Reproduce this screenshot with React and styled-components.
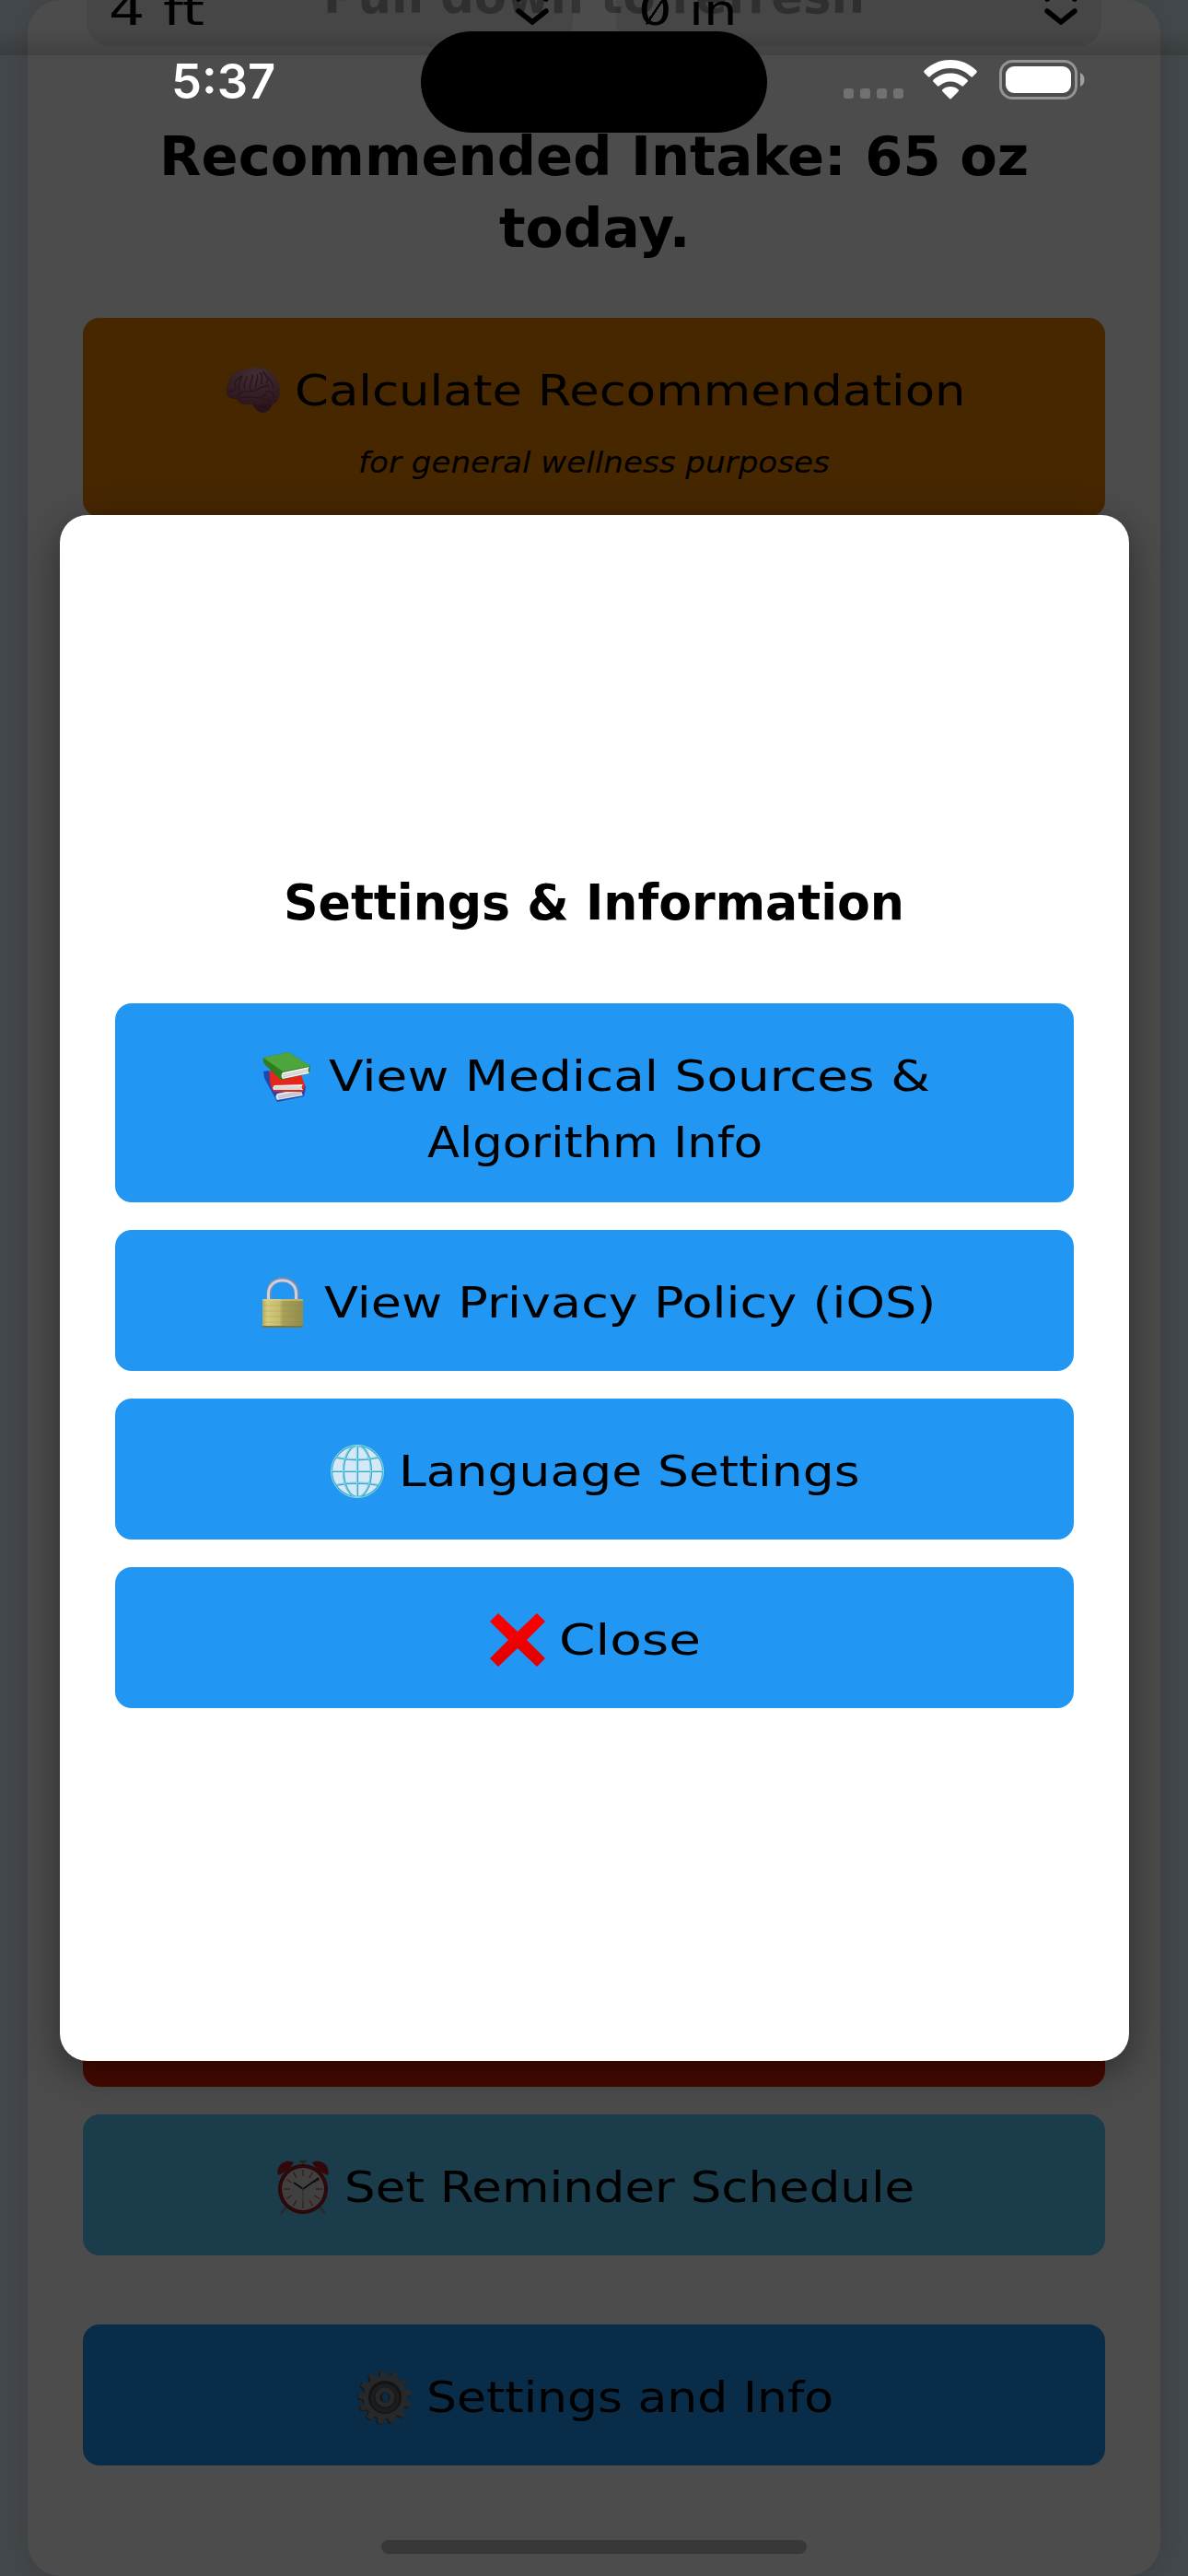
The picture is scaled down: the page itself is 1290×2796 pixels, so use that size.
import React, { useLayoutEffect, useRef, useState } from "react";
import styled, { createGlobalStyle, css } from "styled-components";

// scales a line of text horizontally so that it fills the given width
function FitText({ width, children }) {
  const ref = useRef(null);
  const [scale, setScale] = useState(1);

  useLayoutEffect(() => {
    setScale(width / ref.current.offsetWidth);
  }, [width, children]);

  return (
    <FitBox $width={width}>
      <FitInner ref={ref} style={{ transform: `scaleX(${scale})` }}>
        {children}
      </FitInner>
    </FitBox>
  );
}

const BrainIcon = () => (
  <Icon viewBox="0 0 60 60">
    <defs>
      <radialGradient id="brain" cx="55%" cy="20%" r="80%">
        <stop offset="0" stopColor="#dc9aab" />
        <stop offset="1" stopColor="#9c4d68" />
      </radialGradient>
    </defs>
    <path
      d="M28 44c5-5 18-4 23-1-1 6-5 11-11 11-6-1-8-5-12-10z"
      fill="#874058"
    />
    <path
      d="M5 38C-1 35 0 26 3 22 4 14 10 8 19 8c8-5 20-4 26-1 6 2 9 7 11 12 4 6 4 17 0 22-3 5-9 4-13 4-7 1-12-1-17 0-7 1-12-1-13-6-3 0-6 0-8-1z"
      fill="url(#brain)"
    />
    <g fill="none" stroke="#8c4863" strokeWidth="1.600" strokeLinecap="round">
      <path d="M13 40c-1-8 5-9 11-9 5 0 9 0 12-3 4-4 8-2 11-4M17 37c5 2 9-2 14 0s9 1 12-3M44 31c5-2 9 2 8 8M40 40c4-2 8 0 9 3" />
      <path d="M4 30c4 2 8-2 6-7 0-5 5-7 8-9M15 29c-4-5 2-8 2-13M21 28c-3-5 2-9 2-13M27 29c-3-6 3-9 2-16M33 27c-2-6 4-9 1-14M39 23c-2-5 3-6-1-12M44 22c4-5-1-9-3-12M51 27c2-6-4-7-4-11" />
    </g>
  </Icon>
);

const BooksIcon = () => (
  <Icon viewBox="0 0 60 60">
    <path d="M4 25l6-1 8 22 31-7 1 4-2 9-29 6L5 32z" fill="#2446ab" />
    <path d="M19 49l28-6c-2 3-2 5 0 8l-28 5c-2-2-2-5 0-7z" fill="#dfe3ea" />
    <path d="M20 52l25-5M20 54l25-5" stroke="#9aa3b5" strokeWidth=".8" />
    <path d="M11 24l8-3 26 7 4 12-2 7H16c-4-3-6-11-5-23z" fill="#e6261b" />
    <path d="M16 40l31-1c-2 2-2 4 0 6H15c-1-2-1-3 1-5z" fill="#f1f1f1" />
    <path d="M16 42h29M16 44h29" stroke="#b5b5b5" strokeWidth=".8" />
    <path d="M4 10L31 4l24 15-1 8-31 7L6 18c-2-2-3-5-2-8z" fill="#2e7d21" />
    <path d="M4 10L31 4l24 15-30 6z" fill="#4fa53d" />
    <path d="M25 26l29-6c-2 2-2 5 0 7l-29 6c-2-2-2-5 0-7z" fill="#eee" />
    <path d="M25 29l27-6M25 31l27-6" stroke="#b9b9b9" strokeWidth=".8" />
  </Icon>
);

const LockIcon = () => (
  <Icon viewBox="0 0 60 60">
    <defs>
      <linearGradient id="brass">
        <stop offset="0" stopColor="#b9ac5b" />
        <stop offset=".12" stopColor="#d3cb7e" />
        <stop offset=".42" stopColor="#c4bb6c" />
        <stop offset=".5" stopColor="#a9a15a" />
        <stop offset="1" stopColor="#918c4d" />
      </linearGradient>
    </defs>
    <path
      d="M15 30V20c0-20 30-20 30 0v10"
      fill="none"
      stroke="#7d8ba5"
      strokeWidth="5.500"
    />
    <path
      d="M14.500 30V20c0-19 30-19 30 0v10"
      fill="none"
      stroke="#c9d2e4"
      strokeWidth="3"
    />
    <rect x="8" y="26" width="44" height="31" rx="1.500" fill="url(#brass)" />
    <path d="M8 27h44" stroke="#dcd68e" strokeWidth="1.200" />
    <path d="M8 56h44" stroke="#7c7340" strokeWidth="2" />
    <path
      d="M9 33h42M9 39h42M9 45h42M9 51h42"
      stroke="#8d8440"
      strokeWidth=".6"
      opacity=".4"
    />
  </Icon>
);

const GlobeIcon = () => (
  <Icon viewBox="0 0 60 60">
    <circle cx="30" cy="30" r="28" fill="#d5e8f8" />
    <g fill="none" stroke="#3fa5c6" strokeWidth="2.200">
      <circle cx="30" cy="30" r="28" />
      <ellipse cx="30" cy="30" rx="15" ry="28" />
      <path d="M30 2v56M2 30h56M7 15c14 3 32 3 46 0M7 45c14-3 32-3 46 0" />
    </g>
    <g fill="none" stroke="#7fdcec" strokeWidth="1">
      <circle cx="30" cy="30" r="28.500" />
      <ellipse cx="29.500" cy="30" rx="15" ry="28" />
      <path d="M29.500 2v56M2 29.500h56M7 14.500c14 3 32 3 46 0M7 44.500c14-3 32-3 46 0" />
    </g>
  </Icon>
);

const CrossIcon = () => (
  <Icon viewBox="0 0 60 60">
    <defs>
      <linearGradient id="cross" x2="0" y2="1">
        <stop offset="0" stopColor="#ff0000" />
        <stop offset="1" stopColor="#e00000" />
      </linearGradient>
    </defs>
    <path
      d="M9 1l21 20L51 1l9 9-20 20 20 20-9 9-21-20L9 59l-9-9 20-20L0 10z"
      fill="url(#cross)"
    />
  </Icon>
);

const ClockIcon = () => (
  <Icon viewBox="0 0 60 60">
    <path d="M13 50l-7 9M47 50l7 9" stroke="#8a8a8a" strokeWidth="2.500" />
    <path d="M26 2h8M30 2v5" stroke="#7d7d7d" strokeWidth="2.500" />
    <path
      d="M3 17C0 8 9-2 20 3c-3 6-9 11-17 14zM57 17C60 8 51-2 40 3c3 6 9 11 17 14z"
      fill="#a81d23"
    />
    <circle cx="30" cy="32" r="27" fill="#8e141b" />
    <circle cx="30" cy="32" r="25" fill="none" stroke="#b02a30" />
    <circle cx="30" cy="32" r="23" fill="#d6d6d9" />
    <g stroke="#c6505a" strokeWidth="1.300">
      {[0, 30, 60, 90, 120, 150, 180, 210, 240, 270, 300, 330].map((a) => (
        <path key={a} d="M30 11v7" transform={`rotate(${a} 30 32)`} />
      ))}
    </g>
    <path d="M20 25l10 7 17-12" fill="none" stroke="#222" strokeWidth="1.800" />
    <path d="M30 31v17" stroke="#b59a6d" strokeWidth="1.100" />
  </Icon>
);

const teeth = [...Array(13)].map((_, i) => (i * 360) / 13 - 4);

const GearIcon = () => (
  <Icon viewBox="0 0 60 60">
    <g fill="#50565c" transform="translate(-1.500 1)">
      {teeth.map((a) => (
        <path key={a} d="M27 1h6l2 10H25z" transform={`rotate(${a} 30 30)`} />
      ))}
      <circle cx="30" cy="30" r="23.500" />
    </g>
    <g fill="#82888d">
      {teeth.map((a) => (
        <path key={a} d="M27.500 1h5l2 10h-9z" transform={`rotate(${a} 30 30)`} />
      ))}
      <circle cx="30" cy="30" r="23.500" />
    </g>
    <circle cx="30" cy="30" r="18" fill="#3f454b" />
    <circle cx="30" cy="31" r="15.500" fill="#5b6268" />
    <circle cx="30" cy="31" r="11.500" fill="#474d53" />
    <circle cx="30" cy="30" r="10.500" fill="#7f858a" />
    <circle cx="30" cy="30" r="5.500" fill="#3f454b" />
    <ellipse cx="30.500" cy="30" rx="3.800" ry="4.800" fill="#2196f3" />
  </Icon>
);

const Chevrons = () => (
  <ChevronSvg viewBox="0 0 36 42">
    <path
      d="M3 14L18 2l15 12M3 27l15 12 15-12"
      fill="none"
      stroke="#000"
      strokeWidth="5.500"
      strokeLinecap="round"
    />
  </ChevronSvg>
);

const options = [
  {
    icon: BooksIcon,
    label: "View Medical Sources &",
    width: 653,
    second: "Algorithm Info",
    secondWidth: 364,
  },
  { icon: LockIcon, label: "View Privacy Policy (iOS)", width: 664 },
  { icon: GlobeIcon, label: "Language Settings", width: 501 },
  { icon: CrossIcon, label: "Close", width: 154 },
];

function ActionButton({ icon: IconComp, label, width, color, children }) {
  return (
    <Button $color={color}>
      <ButtonLine>
        <IconComp />
        <FitText width={width}>{label}</FitText>
      </ButtonLine>
      {children}
    </Button>
  );
}

function StatusBar() {
  return (
    <StatusRow>
      <Time>
        <FitText width={113}>5:37</FitText>
      </Time>
      <Island />
      <StatusIcons>
        <Signal>
          <i />
          <i />
          <i />
          <i />
        </Signal>
        <WifiSvg viewBox="0 0 58 43">
          <g fill="#fff">
            <path d="M29 0c11.500 0 21 4.300 28.200 11.500.8.800.8 1.600.1 2.400l-3.900 4c-.8.800-1.600.8-2.400 0C45 12.200 37.500 9 29 9S13 12.200 7 17.900c-.8.800-1.600.8-2.400 0l-3.900-4c-.7-.8-.7-1.600.1-2.400C8 4.300 17.500 0 29 0z" />
            <path d="M29 14.500c7.400 0 13.600 2.700 18.300 7.100.8.800.8 1.700 0 2.500l-4 4c-.8.800-1.600.7-2.400 0-3.300-2.900-7.300-4.600-11.900-4.600s-8.600 1.700-11.900 4.600c-.8.700-1.600.8-2.400 0l-4-4c-.8-.8-.8-1.700 0-2.500 4.700-4.400 10.900-7.100 18.300-7.100z" />
            <path d="M29 29c3.400 0 6.200 1.200 8.400 3 .8.700.8 1.600 0 2.400l-7.200 7.400c-.8.800-1.600.8-2.400 0l-7.200-7.400c-.8-.8-.8-1.700 0-2.400 2.200-1.800 5-3 8.400-3z" />
          </g>
        </WifiSvg>
        <BatterySvg viewBox="0 0 94 43">
          <rect
            x="1.500"
            y="1.500"
            width="82"
            height="40"
            rx="13"
            fill="none"
            stroke="#949494"
            strokeWidth="3"
          />
          <rect x="7" y="7" width="71" height="29" rx="9" fill="#fff" />
          <path d="M88 14c6 2 6 13 0 15z" fill="#a0a0a0" />
        </BatterySvg>
      </StatusIcons>
    </StatusRow>
  );
}

export default function App() {
  return (
    <Screen>
      <GlobalStyle />
      <Card>
        <SelectRow>
          <Select>
            <FitText width={104}>4 ft</FitText>
            <Chevrons />
          </Select>
          <Select>
            <FitText width={108}>
              <Zero>0</Zero> in
            </FitText>
            <Chevrons />
          </Select>
        </SelectRow>
        <Heading>
          <FitText width={944}>Recommended Intake: 65 oz</FitText>
          <FitText width={207}>today.</FitText>
        </Heading>
        <ActionButton
          icon={BrainIcon}
          label="Calculate Recommendation"
          width={728}
          color="#ec8200"
        >
          <Note>
            <FitText width={512}>for general wellness purposes</FitText>
          </Note>
        </ActionButton>
        <Spacer />
        <Button $color="#eb2200" />
        <ActionButton
          icon={ClockIcon}
          label="Set Reminder Schedule"
          width={619}
          color="#5ac8fa"
        />
        <SettingsSlot>
          <ActionButton
            icon={GearIcon}
            label="Settings and Info"
            width={442}
            color="#2196f3"
          />
        </SettingsSlot>
      </Card>
      <RefreshBar>
        <FitText width={588}>Pull down to refresh</FitText>
      </RefreshBar>
      <HomeIndicator />
      <Backdrop>
        <Modal>
          <Title>
            <FitText width={674}>Settings &amp; Information</FitText>
          </Title>
          <Options>
            {options.map((o) => (
              <ActionButton key={o.label} {...o} color="#2196f3">
                {o.second && (
                  <ButtonLine>
                    <FitText width={o.secondWidth}>{o.second}</FitText>
                  </ButtonLine>
                )}
              </ActionButton>
            ))}
          </Options>
        </Modal>
      </Backdrop>
      <StatusBar />
    </Screen>
  );
}

const GlobalStyle = createGlobalStyle`
  * {
    box-sizing: border-box;
  }
  body {
    margin: 0;
    font-family: "DejaVu Sans", sans-serif;
    color: #000;
  }
`;

const FitBox = styled.span`
  display: block;
  flex: none;
  width: ${({ $width }) => $width}px;
  white-space: nowrap;
`;

const FitInner = styled.span`
  display: inline-block;
  transform-origin: left center;
`;

const Screen = styled.div`
  position: relative;
  width: 1290px;
  height: 2796px;
  overflow: hidden;
  padding: 0 30px;
  background: #e3f2fd;
`;

const Card = styled.main`
  height: 2796px;
  padding: 0 60px;
  border-radius: 36px;
  background: #fff;
  box-shadow: 0 6px 36px rgba(0, 0, 0, 0.14);
  overflow: hidden;
`;

const SelectRow = styled.div`
  display: grid;
  grid-template-columns: 1fr 1fr;
  gap: 47px;
  margin: -81px 4px 0;
`;

const Select = styled.div`
  display: flex;
  align-items: flex-end;
  justify-content: space-between;
  height: 132px;
  padding: 0 26px 10px 24px;
  border-radius: 27px;
  background: #ebebeb;
  font-size: 47px;
  line-height: 60px;
`;

const Zero = styled.span`
  background: linear-gradient(
      to bottom right,
      transparent 46%,
      #000 46%,
      #000 54%,
      transparent 54%
    )
    center 55% / 56% 56% no-repeat;
`;

const ChevronSvg = styled.svg`
  width: 36px;
  height: 42px;
  margin-bottom: 14px;
`;

const Heading = styled.h1`
  display: flex;
  flex-direction: column;
  align-items: center;
  margin: 80px 0 58px;
  font-size: 59px;
  font-weight: 700;
  line-height: 78px;
`;

const Icon = styled.svg`
  flex: none;
  width: 60px;
  height: 60px;
`;

const Button = styled.div`
  min-height: 153px;
  padding: 43px 0 0;
  border-radius: 18px;
  background: ${({ $color }) => $color};
  font-size: 47px;
  line-height: 70px;

  & + & {
    margin-top: 30px;
  }
  ${({ children }) =>
    children &&
    children[1] &&
    css`
      height: 216px;
    `}
`;

const ButtonLine = styled.div`
  display: flex;
  align-items: center;
  justify-content: center;
  gap: 15px;
  height: 72px;
  padding-left: 2px;
`;

const Note = styled.div`
  display: flex;
  justify-content: center;
  margin-top: 20px;
  font-size: 32px;
  font-style: italic;
  line-height: 44px;
`;

/* room for the part of the form that lies under the dialog */
const Spacer = styled.div`
  height: 1551px;
`;

const SettingsSlot = styled.div`
  margin-top: 75px;
`;

const RefreshBar = styled.div`
  position: absolute;
  top: 0;
  left: 0;
  display: flex;
  align-items: flex-end;
  justify-content: center;
  width: 100%;
  height: 60px;
  padding-bottom: 34px;
  background: linear-gradient(transparent 55%, rgba(0, 0, 0, 0.14));
  color: rgba(0, 0, 0, 0.32);
  font-size: 54px;
  font-weight: 700;
  line-height: 60px;
`;

const HomeIndicator = styled.div`
  position: absolute;
  left: 414px;
  bottom: 24px;
  width: 462px;
  height: 15px;
  border-radius: 8px;
  background: #bcbcbc;
`;

const Backdrop = styled.div`
  position: absolute;
  inset: 0;
  display: flex;
  align-items: center;
  justify-content: center;
  background: rgba(0, 0, 0, 0.7);
`;

const Modal = styled.section`
  display: flex;
  flex-direction: column;
  justify-content: center;
  width: 1161px;
  height: 1678px;
  padding: 0 60px;
  border-radius: 30px;
  background: #fff;
  box-shadow: 0 12px 42px rgba(0, 0, 0, 0.42);
`;

const Title = styled.h2`
  display: flex;
  justify-content: center;
  margin: 0 0 71px;
  font-size: 53px;
  font-weight: 700;
  line-height: 76px;
`;

const Options = styled.div`
  display: flex;
  flex-direction: column;
`;

const StatusRow = styled.header`
  position: absolute;
  top: 34px;
  left: 0;
  display: grid;
  grid-template-columns: 457px 376px 457px;
  width: 100%;
  height: 110px;
`;

const Time = styled.div`
  padding: 25px 0 0 186px;
  color: #fff;
  font-family: Inter, sans-serif;
  font-size: 52px;
  font-weight: 600;
  line-height: 60px;
`;

const Island = styled.div`
  border-radius: 56px;
  background: #000;
`;

const StatusIcons = styled.div`
  display: flex;
  align-items: flex-start;
  padding: 31px 0 0 83px;
`;

const Signal = styled.div`
  display: flex;
  gap: 7px;
  margin: 31px 22px 0 0;

  i {
    width: 11px;
    height: 11px;
    border-radius: 3px;
    background: #717171;
  }
`;

const WifiSvg = styled.svg`
  width: 58px;
  height: 43px;
  margin-right: 24px;
`;

const BatterySvg = styled.svg`
  width: 94px;
  height: 43px;
`;
